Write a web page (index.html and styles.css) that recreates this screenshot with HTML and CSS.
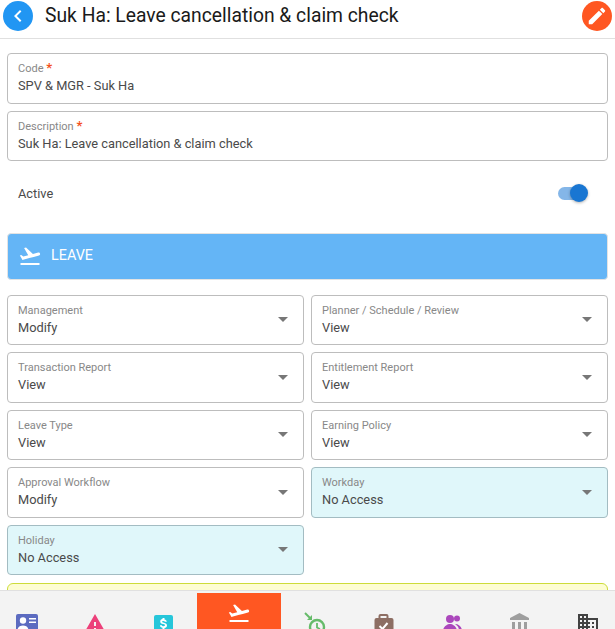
FILE: index.html
```html
<!DOCTYPE html>
<html lang="en">
<head>
  <meta charset="UTF-8">
  <title>Suk Ha: Leave cancellation &amp; claim check</title>
  <link rel="stylesheet" href="styles.css">
</head>
<body>
  <header class="top-bar">
    <button class="round-btn back-btn">
      <svg viewBox="0 0 24 24" width="24" height="24"><path d="M15.41 7.41L14 6l-6 6 6 6 1.41-1.41L10.83 12z"/></svg>
    </button>
    <h1>Suk Ha: Leave cancellation &amp; claim check</h1>
    <button class="round-btn edit-btn">
      <svg viewBox="0 0 24 24" width="22" height="22"><path d="M3 17.25V21h3.75L17.81 9.94l-3.75-3.75L3 17.25zM20.71 7.04c.39-.39.39-1.02 0-1.41l-2.34-2.34c-.39-.39-1.02-.39-1.41 0l-1.83 1.83 3.75 3.75 1.83-1.83z"/></svg>
    </button>
  </header>

  <main class="content">
    <div class="field">
      <span class="field-label">Code <b>*</b></span>
      <span class="field-value">SPV &amp; MGR - Suk Ha</span>
    </div>
    <div class="field">
      <span class="field-label">Description <b>*</b></span>
      <span class="field-value">Suk Ha: Leave cancellation &amp; claim check</span>
    </div>

    <div class="active-row">
      <span>Active</span>
      <div class="switch"><div class="switch-thumb"></div></div>
    </div>

    <div class="section-banner">
      <svg viewBox="0 0 24 24" width="24" height="24"><path d="M2.5 19h19v2h-19v-2zm19.57-9.36c-.21-.8-1.04-1.28-1.84-1.06L14.92 10l-6.9-6.43-1.93.51 4.14 7.17-4.97 1.33-1.97-1.54-1.45.39 1.82 3.16.77 1.33 1.6-.43 5.31-1.42 4.35-1.16L21 11.49c.81-.23 1.28-1.05 1.07-1.85z"/></svg>
      <span>LEAVE</span>
    </div>

    <div class="select-grid">
      <div class="field select"><span class="field-label">Management</span><span class="field-value">Modify</span></div>
      <div class="field select"><span class="field-label">Planner / Schedule / Review</span><span class="field-value">View</span></div>
      <div class="field select"><span class="field-label">Transaction Report</span><span class="field-value">View</span></div>
      <div class="field select"><span class="field-label">Entitlement Report</span><span class="field-value">View</span></div>
      <div class="field select"><span class="field-label">Leave Type</span><span class="field-value">View</span></div>
      <div class="field select"><span class="field-label">Earning Policy</span><span class="field-value">View</span></div>
      <div class="field select"><span class="field-label">Approval Workflow</span><span class="field-value">Modify</span></div>
      <div class="field select no-access"><span class="field-label">Workday</span><span class="field-value">No Access</span></div>
      <div class="field select no-access"><span class="field-label">Holiday</span><span class="field-value">No Access</span></div>
    </div>

    <div class="notice"></div>
  </main>

  <nav class="tabs">
    <div class="tab">
      <svg viewBox="0 0 24 24" width="24" height="24"><path fill="#5c6bc0" d="M3 2h18a2 2 0 0 1 2 2v16a2 2 0 0 1-2 2H3a2 2 0 0 1-2-2V4a2 2 0 0 1 2-2z"/><circle cx="8" cy="8.500" r="3.200" fill="#fff"/><path fill="#fff" d="M2.500 18c0-3 3-4.500 5.500-4.500s5.500 1.500 5.500 4.500zM14 6h7v1.600h-7zM14 9.500h7v1.600h-7z"/></svg>
    </div>
    <div class="tab">
      <svg viewBox="0 0 24 24" width="24" height="24"><path fill="#ec407a" d="M1 21h22L12 2 1 21zm12-3h-2v-2h2v2zm0-4h-2v-4h2v4z"/></svg>
    </div>
    <div class="tab">
      <svg viewBox="0 0 24 24" width="24" height="24"><rect x="3" y="3" width="19" height="19" rx="2" fill="#26c6da"/><path fill="#fff" d="M11.500 6h2v1.400c1.300.2 2.200 1 2.400 2.300h-2c-.1-.5-.6-.7-1.400-.7-1 0-1.400.3-1.400.8s.5.700 1.800 1c2 .5 3.100 1.200 3.100 2.800 0 1.300-1 2.200-2.500 2.500V17h-2v-1.200c-1.500-.3-2.500-1.200-2.600-2.600h2c.1.700.7 1 1.600 1 1.100 0 1.500-.4 1.500-.9 0-.6-.4-.8-1.900-1.200-1.800-.4-2.900-1.100-2.900-2.600 0-1.200 1-2.100 2.300-2.400z"/></svg>
    </div>
    <div class="tab tab-active">
      <svg viewBox="0 0 24 24" width="24" height="24"><path fill="#fff" d="M2.500 19h19v2h-19v-2zm19.570-9.360c-.21-.8-1.040-1.280-1.840-1.060L14.920 10l-6.900-6.430-1.930.51 4.140 7.170-4.970 1.330-1.970-1.540-1.450.39 1.820 3.160.77 1.330 1.600-.43 5.310-1.420 4.350-1.160L21 11.490c.81-.23 1.280-1.050 1.070-1.850z"/></svg>
    </div>
    <div class="tab">
      <svg viewBox="0 0 24 24" width="24" height="24"><path fill="none" stroke="#66bb6a" stroke-width="2" d="M2 1l6 6"/><path fill="#66bb6a" d="M9 3v5H4z"/><circle cx="14" cy="15" r="7" fill="none" stroke="#66bb6a" stroke-width="2.400"/><path fill="none" stroke="#66bb6a" stroke-width="1.800" d="M14 11v4.500l3 1.500"/></svg>
    </div>
    <div class="tab">
      <svg viewBox="0 0 24 24" width="24" height="24"><path fill="#8d6e63" d="M9.500 2h6a2 2 0 0 1 2 2v2h3a2 2 0 0 1 2 2v14a2 2 0 0 1-2 2h-15a2 2 0 0 1-2-2V8a2 2 0 0 1 2-2h2V4a2 2 0 0 1 2-2zm0 2v2h6V4z"/><path fill="none" stroke="#fff" stroke-width="2" d="M8.500 14l3 3 5-6"/></svg>
    </div>
    <div class="tab">
      <svg viewBox="0 0 24 24" width="24" height="24"><circle cx="11" cy="7" r="4" fill="#ab47bc"/><circle cx="18" cy="6.500" r="3" fill="#ab47bc"/><path fill="#ab47bc" d="M4 24v-5c0-4 4-7 7-7s7 3 7 7v5zM16 12c4 0 7 3 7 7v5h-3v-5c0-3-1-5-4-7z"/></svg>
    </div>
    <div class="tab">
      <svg viewBox="-1 0 24 24" width="24" height="24"><path fill="#9e9e9e" d="M4 10v7h3v-7H4zm6 0v7h3v-7h-3zM2 22h19v-3H2v3zm14-12v7h3v-7h-3zm-4.500-9L2 6v2h19V6l-9.500-5z"/></svg>
    </div>
    <div class="tab">
      <svg viewBox="-1 1 24 24" width="24" height="24"><path fill="#424242" d="M12 7V3H2v18h20V7H12zM6 19H4v-2h2v2zm0-4H4v-2h2v2zm0-4H4V9h2v2zm0-4H4V5h2v2zm4 12H8v-2h2v2zm0-4H8v-2h2v2zm0-4H8V9h2v2zm0-4H8V5h2v2zm10 12h-8v-2h2v-2h-2v-2h2v-2h-2V9h8v10zm-2-8h-2v2h2v-2zm0 4h-2v2h2v-2z"/></svg>
    </div>
  </nav>
</body>
</html>
```

FILE: styles.css
```css
html, body {
  height: 100%;
}

body {
  margin: 0;
  display: flex;
  flex-direction: column;
  overflow: hidden;
  font-family: Roboto, sans-serif;
  color: #4a4a4a;
  background: #fff;
}

.top-bar {
  flex: none;
  height: 38px;
  display: flex;
  align-items: center;
  padding: 0 3px;
  border-bottom: 1px solid #e0e0e0;
}

.top-bar h1 {
  flex: 1;
  margin: 0 0 7px 12px;
  font-size: 19.3px;
  font-weight: 400;
  color: #1a1a1a;
  white-space: nowrap;
}

.round-btn {
  width: 30px;
  height: 30px;
  padding: 0;
  margin-bottom: 7px;
  border: none;
  border-radius: 50%;
  display: flex;
  align-items: center;
  justify-content: center;
  fill: #fff;
}

.back-btn {
  background: #2196f3;
}

.edit-btn {
  background: #ff5722;
}

.content {
  flex: 1;
  min-height: 0;
  overflow: hidden;
  padding: 14px 7px 0;
}

.field {
  position: relative;
  box-sizing: border-box;
  height: 50.5px;
  margin-bottom: 7px;
  padding: 8px 10px 0;
  border: 1px solid #bdbdbd;
  border-radius: 4px;
}

.field-label {
  display: block;
  font-size: 11px;
  line-height: 14px;
  color: #888;
}

.field-label b {
  font-size: 13px;
  font-weight: 700;
  line-height: 0;
  color: #f4511e;
}

.field-value {
  display: block;
  margin-top: 2px;
  font-size: 12.8px;
  line-height: 16px;
}

.active-row {
  display: flex;
  align-items: center;
  justify-content: space-between;
  box-sizing: border-box;
  height: 65px;
  padding: 0 21px 14px 11px;
  font-size: 12.8px;
}

.switch {
  position: relative;
  width: 29px;
  height: 13px;
  border-radius: 7px;
  background: #84b6e8;
}

.switch-thumb {
  position: absolute;
  top: -3px;
  right: -1px;
  width: 18px;
  height: 18px;
  border-radius: 50%;
  background: #1976d2;
  box-shadow: 0 1px 3px rgba(0, 0, 0, 0.3);
}

.section-banner {
  box-sizing: border-box;
  height: 47px;
  display: flex;
  align-items: center;
  gap: 9px;
  padding: 0 0 2px 10px;
  margin-bottom: 14.5px;
  border: 1px solid #e3e3e3;
  border-radius: 4px;
  background: #64b5f6;
  color: #fff;
  fill: #fff;
  font-size: 14.4px;
}

.select-grid {
  display: grid;
  grid-template-columns: 1fr 1fr;
  column-gap: 7px;
}

.select::after {
  content: '';
  position: absolute;
  top: 21.5px;
  right: 15px;
  border-left: 5px solid transparent;
  border-right: 5px solid transparent;
  border-top: 5px solid #777;
}

.no-access {
  background: #e0f7fa;
  border-color: #a3bcc2;
}

.notice {
  box-sizing: border-box;
  height: 60px;
  margin-top: 1px;
  border: 1px solid #cddc39;
  border-radius: 6px;
  background: #fdfdd2;
}

.tabs {
  flex: none;
  height: 39px;
  display: flex;
  overflow: hidden;
  padding-top: 2px;
  box-sizing: border-box;
  border-top: 1px solid #e0e0e0;
  background: #f3f3f3;
}

.tab {
  flex: none;
  width: 68px;
  padding-top: 19px;
  display: flex;
  justify-content: center;
}

.tab:first-child {
  margin-left: -7px;
}

.tab-active {
  width: 84px;
  padding-top: 8px;
  background: #ff5722;
}

.tab svg {
  flex: none;
}
```
